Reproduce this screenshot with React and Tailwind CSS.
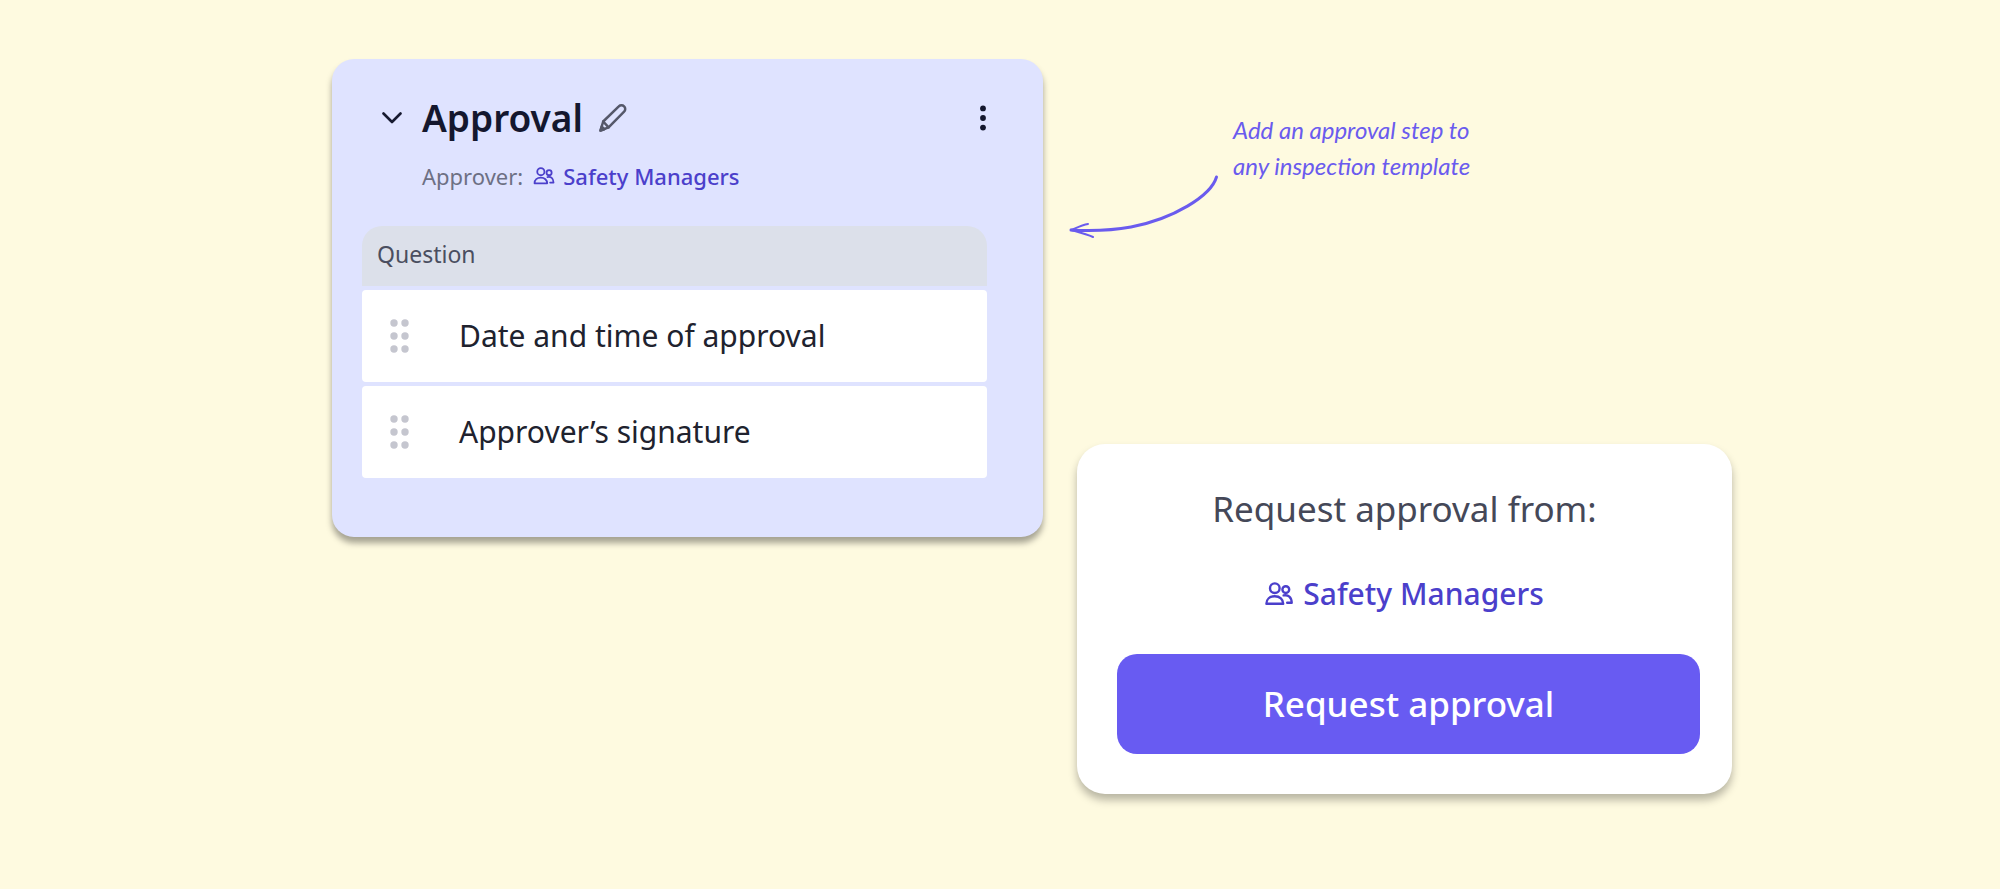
import React from 'react';
import { clsx } from 'clsx';

const QUESTIONS = [
  { key: 'date', label: 'Date and time of approval' },
  { key: 'signature', label: 'Approver’s signature' },
];

function PeopleIcon({ className }) {
  return (
    <svg viewBox="0 0 28 24" fill="none" stroke="currentColor" strokeWidth="2.400" strokeLinejoin="round" strokeLinecap="round" className={className} aria-hidden="true">
      <circle cx="9.800" cy="6.200" r="4.800" />
      <path d="M1.400 21.800c0-4.600 3.400-7.600 8.400-7.600s8.400 3 8.400 7.600z" />
      <circle cx="20.800" cy="7.600" r="3.400" />
      <path d="M18.600 13.400c4.600-1 8 1.600 8.100 7.400h-4.500" />
    </svg>
  );
}

function PencilIcon({ className }) {
  return (
    <svg viewBox="0 0 28 28" fill="none" stroke="currentColor" strokeWidth="2.500" strokeLinejoin="round" strokeLinecap="round" className={className} aria-hidden="true">
      <path d="M1.500 26.500l2.700-9L19.800 2.400a3.700 3.700 0 0 1 5.300 0a3.700 3.700 0 0 1 0 5.300L9.600 23.400z" />
      <path d="M4.200 17.500l5.400 5.900" />
      <path d="M1.500 26.500l1.200-4l2.600 2.700z" fill="currentColor" />
    </svg>
  );
}

function GripIcon({ className }) {
  return (
    <svg viewBox="0 0 20 36" fill="currentColor" className={className} aria-hidden="true">
      {[5, 18, 31].map((y) => (
        <React.Fragment key={y}>
          <circle cx="4" cy={y} r="3.700" />
          <circle cx="15" cy={y} r="3.700" />
        </React.Fragment>
      ))}
    </svg>
  );
}

// Group link, shared by both cards
function ApproverLink({ large }) {
  return (
    <a href="#safety-managers" className={clsx('inline-flex items-center font-medium text-[#4b3fcb]', large ? 'gap-[10px] text-[30px] leading-10' : 'gap-2 text-[22px] leading-8')}>
      <PeopleIcon className={large ? 'h-6 w-7' : 'h-[18px] w-[22px]'} />
      Safety Managers
    </a>
  );
}

function ApprovalCard() {
  return (
    <section className="rounded-[22px] bg-[#dfe3ff] pt-[33px] pr-14 pb-[55px] pl-[30px] shadow-[0_6px_6px_rgba(0,0,0,0.35)]">
      <header className="flex items-center">
        <button type="button" aria-label="Collapse section" className="flex w-15 justify-start pl-5 text-[#171a30]">
          <svg viewBox="0 0 20 12" fill="none" stroke="currentColor" strokeWidth="2.600" strokeLinecap="round" strokeLinejoin="round" className="h-3 w-5">
            <path d="M1.500 1.500l8.500 8.500l8.500-8.500" />
          </svg>
        </button>
        <h2 className="text-[37px] leading-[52px] font-semibold text-[#14172e]">Approval</h2>
        <button type="button" aria-label="Rename section" className="ml-4 text-[#55586a]">
          <PencilIcon className="h-7 w-7" />
        </button>
        <button type="button" aria-label="More options" className="ml-auto text-[#14172e]">
          <svg viewBox="0 0 8 26" fill="currentColor" className="h-[26px] w-2">
            <circle cx="4" cy="3.400" r="2.900" />
            <circle cx="4" cy="13" r="2.900" />
            <circle cx="4" cy="22.600" r="2.900" />
          </svg>
        </button>
      </header>

      <p className="mt-4 flex items-center gap-[10px] pl-15 text-[22px] leading-8 text-[#6d7084]">
        Approver:
        <ApproverLink />
      </p>

      <table className="mt-[30px] w-full border-separate border-spacing-x-0 border-spacing-y-1 text-left">
        <thead>
          <tr>
            <th colSpan={2} scope="col" className="h-15 rounded-t-[20px] bg-[#dce0ea] px-[15px] pb-1 text-[23px] leading-8 font-normal text-[#4a4e60]">
              Question
            </th>
          </tr>
        </thead>
        <tbody>
          {QUESTIONS.map((q) => (
            <tr key={q.key}>
              <td className="h-[92px] w-[97px] rounded-l bg-white pl-7">
                <button type="button" aria-label={`Reorder ${q.label}`} className="block text-[#c5c6cf]">
                  <GripIcon className="h-9 w-5" />
                </button>
              </td>
              <td className="rounded-r bg-white text-[30px] leading-10 text-[#20222e]">{q.label}</td>
            </tr>
          ))}
        </tbody>
      </table>
    </section>
  );
}

function Annotation() {
  return (
    <div className="-ml-2 flex items-start gap-3">
      <svg viewBox="0 0 152 66" fill="none" stroke="#6a5bee" strokeLinecap="round" strokeLinejoin="round" className="mt-[62px] h-[66px] w-[152px] shrink-0" aria-hidden="true">
        <path d="M147.500 3C142 22 104 45 62 53C40 57 20 57 2 56" strokeWidth="3" />
        <path d="M19 50C13 51 7 54 2 56C9 58 17 60 24 63" strokeWidth="2" />
      </svg>
      <p className="font-['Lato',sans-serif] text-[24px] leading-9 text-[#6a5bee] italic">
        Add an approval step to
        <br />
        any inspection template
      </p>
    </div>
  );
}

function RequestCard() {
  return (
    <section className="flex flex-col items-center rounded-[28px] bg-white pt-10 pb-10 shadow-[0_6px_8px_rgba(0,0,0,0.28)]">
      <h2 className="text-[35px] leading-[50px] text-[#454858]">Request approval from:</h2>
      <div className="mt-10 flex">
        <ApproverLink large />
      </div>
      <button type="button" className="mt-10 mr-8 ml-10 h-[100px] self-stretch rounded-[20px] bg-[#685bf2] text-[35px] leading-[50px] font-medium text-white">
        Request approval
      </button>
    </section>
  );
}

export default function App() {
  return (
    <main className="min-h-screen bg-[#fefae0] pt-[59px] pb-16 pl-16 font-['Noto_Sans',sans-serif]">
      <div className="mx-auto grid max-w-[1400px] grid-cols-[711fr_655fr] items-start gap-x-[34px]">
        <ApprovalCard />
        <div className="flex flex-col gap-[204px] pt-[53px]">
          <Annotation />
          <RequestCard />
        </div>
      </div>
    </main>
  );
}
